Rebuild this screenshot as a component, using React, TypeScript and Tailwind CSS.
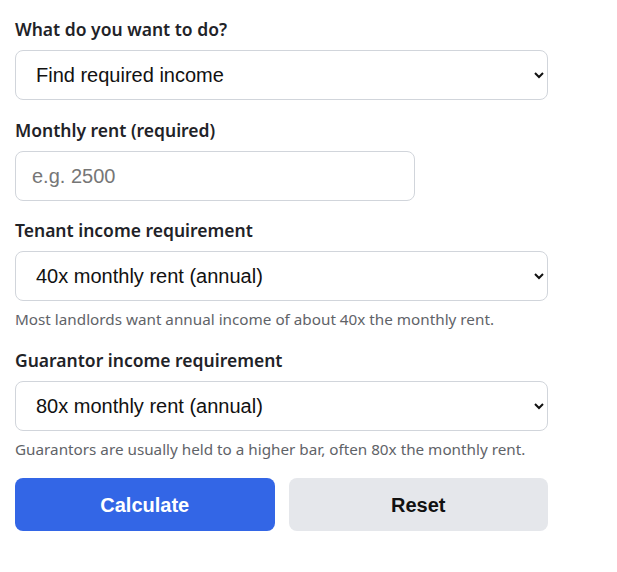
import React from "react"

const labelCls = "block mb-2 text-[17.5px] leading-[25px] font-semibold text-[#1f2328] [font-family:'Noto_Sans',sans-serif]"
const fieldCls =
  "h-[50px] rounded-lg border border-[#d1d5db] bg-white px-4 text-[20px] text-[#111] [font-family:'Liberation_Sans',Arial,sans-serif]"
const helpCls = "mt-[7px] text-[15.25px] leading-[22px] text-[#5f6368] [font-family:'Noto_Sans',sans-serif]"

export default function App() {
  return (
    <div className="min-h-screen bg-white px-[15px] pt-[17px]">
      <form className="w-[533px] flex flex-col" onSubmit={(e) => e.preventDefault()}>
        <div className="mb-[18px]">
          <label className={labelCls}>What do you want to do?</label>
          <select className={`${fieldCls} w-full`} defaultValue="income">
            <option value="income">Find required income</option>
            <option value="rent">Find max rent</option>
          </select>
        </div>

        <div className="mb-[17px]">
          <label className={labelCls}>Monthly rent (required)</label>
          <input
            className={`${fieldCls} w-[400px] placeholder:text-[#767676] outline-none`}
            placeholder="e.g. 2500"
          />
        </div>

        <div className="mb-[18px]">
          <label className={labelCls}>Tenant income requirement</label>
          <select className={`${fieldCls} w-full`} defaultValue="40">
            <option value="40">40x monthly rent (annual)</option>
          </select>
          <p className={helpCls}>Most landlords want annual income of about 40x the monthly rent.</p>
        </div>

        <div className="mb-[18px]">
          <label className={labelCls}>Guarantor income requirement</label>
          <select className={`${fieldCls} w-full`} defaultValue="80">
            <option value="80">80x monthly rent (annual)</option>
          </select>
          <p className={helpCls}>Guarantors are usually held to a higher bar, often 80x the monthly rent.</p>
        </div>

        <div className="grid grid-cols-2 gap-[14px]">
          <button className="h-[53px] rounded-lg bg-[#3366e6] text-white text-[20px] font-bold [font-family:'Liberation_Sans',Arial,sans-serif]">
            Calculate
          </button>
          <button
            type="button"
            className="h-[53px] rounded-lg bg-[#e5e7eb] text-[#111] text-[20px] font-bold [font-family:'Liberation_Sans',Arial,sans-serif]"
          >
            Reset
          </button>
        </div>
      </form>
    </div>
  )
}
